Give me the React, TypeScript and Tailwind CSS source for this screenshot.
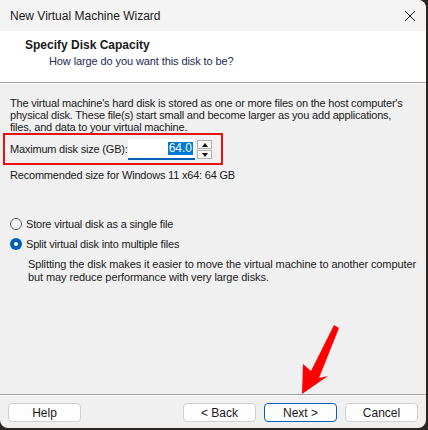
import React from "react";

const font = { fontFamily: '"Liberation Sans", Arial, sans-serif' };

function Radio({ checked }: { checked?: boolean }) {
  if (checked) {
    return (
      <span className="flex h-[12px] w-[12px] items-center justify-center rounded-full bg-[#005fb8]">
        <span className="h-[4px] w-[4px] rounded-full bg-white" />
      </span>
    );
  }
  return <span className="h-[12px] w-[12px] rounded-full border border-[#5f5f5f] bg-[#f7f7f7]" />;
}

function Btn({ label, primary }: { label: string; primary?: boolean }) {
  return (
    <div
      className={
        "flex h-[19px] w-[73px] items-center justify-center rounded-[4px] bg-[#fdfdfd] text-[12px] text-[#1a1a1a] " +
        (primary ? "border border-[#005fb8]" : "border border-[#d0d0d0]")
      }
    >
      {label}
    </div>
  );
}

export default function App() {
  return (
    <div className="relative h-[430px] w-[428px] overflow-hidden bg-[#2a2624]" style={font}>
      <div className="flex h-[428px] w-[426px] flex-col overflow-hidden rounded-tr-[8px] rounded-b-[8px] bg-[#f0f0f0] text-[#1a1a1a]">
        {/* title bar */}
        <div className="flex h-[31px] shrink-0 items-center justify-between bg-[#f3f3f3] pl-[10px] pr-[8px]">
          <span className="text-[12px] text-[#1a1a1a]">New Virtual Machine Wizard</span>
          <svg width="14" height="14" viewBox="0 0 14 14" className="mr-[1px]">
            <path d="M2 2 L12 12 M12 2 L2 12" stroke="#1a1a1a" strokeWidth="1" fill="none" />
          </svg>
        </div>
        {/* header */}
        <div className="flex h-[51px] shrink-0 flex-col bg-white pt-[7px]">
          <div className="pl-[25px] text-[12px] font-bold leading-[14px]">Specify Disk Capacity</div>
          <div className="mt-[2px] pl-[49px] text-[11px] leading-[14px] tracking-[-0.1px] text-[#1c2b57]">
            How large do you want this disk to be?
          </div>
        </div>
        <div className="h-px shrink-0 bg-[#a0a0a0]" />
        <div className="h-px shrink-0 bg-white" />
        {/* body */}
        <div className="flex flex-1 flex-col pt-[13px] text-[11px] tracking-[-0.2px]">
          <div className="pl-[10px] leading-[12px]">
            <div className="whitespace-nowrap">The virtual machine's hard disk is stored as one or more files on the host computer's</div>
            <div className="whitespace-nowrap">physical disk. These file(s) start small and become larger as you add applications,</div>
            <div className="whitespace-nowrap">files, and data to your virtual machine.</div>
          </div>
          <div className="ml-[3px] flex h-[32px] w-[220px] items-center border-2 border-[#e81010] pl-[5px] pt-[1px]">
            <span className="w-[118px] shrink-0 whitespace-nowrap">Maximum disk size (GB):</span>
            <div className="flex h-[21px] w-[67px] items-center justify-end border-b-2 border-[#005fb8] bg-white pr-[2px]">
              <span className="bg-[#0078d7] px-[1px] text-[12px] leading-[13px] tracking-normal text-white">64.0</span>
            </div>
            <div className="ml-[1px] flex h-[21px] w-[17px] flex-col gap-[1px] p-[1px]">
              <div className="flex flex-1 items-center justify-center border border-[#b0b0b0] bg-[#f8f8f8]">
                <svg width="6" height="4" viewBox="0 0 6 4"><path d="M3 0 L6 4 L0 4 Z" fill="#111" /></svg>
              </div>
              <div className="flex flex-1 items-center justify-center border border-[#b0b0b0] bg-[#f8f8f8]">
                <svg width="6" height="4" viewBox="0 0 6 4"><path d="M0 0 L6 0 L3 4 Z" fill="#111" /></svg>
              </div>
            </div>
          </div>
          <div className="mt-[4px] pl-[10px] leading-[12px]">Recommended size for Windows 11 x64: 64 GB</div>

          <div className="mt-[35px] flex h-[16px] items-center gap-[4px] pl-[10px]">
            <Radio />
            <span>Store virtual disk as a single file</span>
          </div>
          <div className="mt-[4px] flex h-[16px] items-center gap-[4px] pl-[10px]">
            <Radio checked />
            <span>Split virtual disk into multiple files</span>
          </div>
          <div className="mt-[6px] pl-[28px] leading-[13px] tracking-[-0.1px]">
            <div className="whitespace-nowrap">Splitting the disk makes it easier to move the virtual machine to another computer</div>
            <div className="whitespace-nowrap">but may reduce performance with very large disks.</div>
          </div>
          <div className="flex-1" />
        </div>
        <div className="h-px shrink-0 bg-[#a0a0a0]" />
        <div className="h-px shrink-0 bg-white" />
        <div className="flex h-[32px] shrink-0 items-start px-[8px] pt-[7px]">
          <Btn label="Help" />
          <div className="flex-1" />
          <div className="flex gap-[8px]">
            <Btn label="< Back" />
            <Btn label="Next >" primary />
            <Btn label="Cancel" />
          </div>
        </div>
      </div>
      <svg className="pointer-events-none absolute left-0 top-0" width="428" height="430" viewBox="0 0 428 430">
        <polygon points="302,394 303,364 311,371 334,325 339,328 319,378 328,376" fill="#ff0000" />
      </svg>
    </div>
  );
}
